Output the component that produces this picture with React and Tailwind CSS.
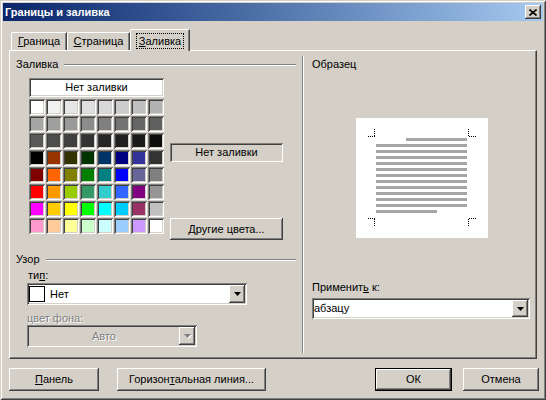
import React from "react";

// Win2000-style bevels, kept as plain strings so Tailwind picks them up
const RAISED =
  "shadow-[inset_-1px_-1px_0_#404040,inset_1px_1px_0_#ffffff,inset_-2px_-2px_0_#808080,inset_2px_2px_0_#d4d0c8]";
const SUNKEN =
  "shadow-[inset_1px_1px_0_#808080,inset_-1px_-1px_0_#ffffff,inset_2px_2px_0_#404040,inset_-2px_-2px_0_#d4d0c8]";
const ETCH = "h-[2px] border-t border-t-[#808080] border-b border-b-white";
const DISABLED_TEXT = "text-[#808080] [text-shadow:1px_1px_0_#ffffff]";

const PALETTE = [
  ["#ffffff", "#f2f2f2", "#e6e6e6", "#dfdfdf", "#d9d9d9", "#cccccc", "#bfbfbf", "#b3b3b3"],
  ["#a6a6a6", "#9f9f9f", "#999999", "#8c8c8c", "#808080", "#737373", "#666666", "#606060"],
  ["#595959", "#4d4d4d", "#404040", "#333333", "#262626", "#202020", "#1a1a1a", "#0d0d0d"],
  ["#000000", "#993300", "#333300", "#003300", "#003366", "#000080", "#333399", "#333333"],
  ["#800000", "#ff6600", "#808000", "#008000", "#008080", "#0000ff", "#666699", "#808080"],
  ["#ff0000", "#ff9900", "#99cc00", "#339966", "#33cccc", "#3366ff", "#800080", "#969696"],
  ["#ff00ff", "#ffcc00", "#ffff00", "#00ff00", "#00ffff", "#00ccff", "#993366", "#c0c0c0"],
  ["#ff99cc", "#ffcc99", "#ffff99", "#ccffcc", "#ccffff", "#99ccff", "#cc99ff", "#ffffff"],
];

function DropButton({ disabled }) {
  return (
    <div className={`w-[16px] h-full bg-[#d4d0c8] flex items-center justify-center ${RAISED}`}>
      <svg width="7" height="4" viewBox="0 0 7 4" className={disabled ? "[filter:drop-shadow(1px_1px_0_#fff)]" : ""}>
        <path d="M0 0h7L3.5 4z" fill={disabled ? "#808080" : "#000"} />
      </svg>
    </div>
  );
}

function Combo({ className, disabled, children }) {
  return (
    <div className={`${className} ${SUNKEN} p-[2px] flex ${disabled ? "bg-[#d4d0c8]" : "bg-white"}`}>
      <div className="flex-1 flex items-center min-w-0">{children}</div>
      <DropButton disabled={disabled} />
    </div>
  );
}

function GroupHeader({ title }) {
  return (
    <div className="flex items-center h-[13px]">
      <span>{title}</span>
      <div className={`flex-1 ml-[6px] ${ETCH}`} />
    </div>
  );
}

function Button({ className, children }) {
  return (
    <div className={`${className} h-full bg-[#d4d0c8] flex items-center justify-center ${RAISED}`}>
      {children}
    </div>
  );
}

function Dotted({ x1, y1, x2, y2 }) {
  return (
    <line
      x1={x1 + 0.5}
      y1={y1 + 0.5}
      x2={x2 + 0.5}
      y2={y2 + 0.5}
      stroke="#000"
      strokeWidth="1"
      strokeDasharray="1 1"
      shapeRendering="crispEdges"
    />
  );
}

function Preview() {
  const rows = Array.from({ length: 11 }, (_, i) => 26 + i * 6);
  return (
    <svg width="132" height="120" viewBox="0 0 132 120" className="block">
      <rect width="132" height="120" fill="#fff" />
      <Dotted x1={11} y1={18} x2={18} y2={18} />
      <Dotted x1={18} y1={10} x2={18} y2={18} />
      <Dotted x1={112} y1={10} x2={112} y2={18} />
      <Dotted x1={112} y1={18} x2={120} y2={18} />
      <Dotted x1={11} y1={100} x2={18} y2={100} />
      <Dotted x1={18} y1={100} x2={18} y2={108} />
      <Dotted x1={112} y1={100} x2={112} y2={108} />
      <Dotted x1={112} y1={100} x2={120} y2={100} />
      <rect x="50" y="20" width="61" height="3" fill="#a6a6a6" />
      {rows.map((y) => (
        <rect key={y} x="20" y={y} width="91" height="3" fill="#a6a6a6" />
      ))}
      <rect x="20" y="92" width="61" height="3" fill="#a6a6a6" />
    </svg>
  );
}

function FillSection() {
  return (
    <div className="flex mt-[7px] ml-[13px]">
      <div className="w-[135px] flex flex-col">
        <div className={`h-[19px] bg-white flex items-center justify-center ${SUNKEN}`}>Нет заливки</div>
        <div className="mt-[2px] grid grid-cols-[repeat(8,16px)] auto-rows-[16px] gap-[1px]">
          {PALETTE.flat().map((c, i) => (
            <div key={i} className={`w-[16px] h-[16px] ${SUNKEN}`} style={{ backgroundColor: c }} />
          ))}
        </div>
      </div>
      <div className="ml-[6px] w-[113px] flex flex-col">
        <div className={`mt-[65px] h-[19px] flex items-center justify-center ${SUNKEN}`}>Нет заливки</div>
        <div className="mt-[56px] h-[22px]">
          <Button className="w-full">
            <span>
              <u>Д</u>ругие цвета...
            </span>
          </Button>
        </div>
      </div>
    </div>
  );
}

function TabsRow() {
  const tab =
    "h-[18px] border-t border-l border-white rounded-tl-[2px] border-r border-r-[#404040] shadow-[inset_-1px_0_0_#808080] flex items-center justify-center";
  return (
    <div className="relative z-10 flex items-end h-[21px] pl-[2px]">
      <div className={`w-[56px] ${tab}`}>
        <span>
          <u>Г</u>раница
        </span>
      </div>
      <div className={`w-[63px] ${tab}`}>
        <span>
          <u>С</u>траница
        </span>
      </div>
      <div className="w-[60px] h-[22px] -mb-px bg-[#d4d0c8] border-t border-l border-white rounded-tl-[2px] border-r border-r-[#404040] shadow-[inset_-1px_0_0_#808080] flex justify-center pt-[3px]">
        <span className="h-[16px] px-[2px] border border-dotted border-black flex items-center">
          <span>
            <u>З</u>аливка
          </span>
        </span>
      </div>
    </div>
  );
}

export default function App() {
  return (
    <div className="w-[546px] h-[400px] bg-[#d4d0c8] font-['Liberation_Sans',Arial,sans-serif] text-[11px] leading-[13px] text-black p-[3px] flex flex-col shadow-[inset_1px_1px_0_#d4d0c8,inset_-1px_-1px_0_#404040,inset_2px_2px_0_#ffffff,inset_-2px_-2px_0_#808080]">
      <div className="h-[18px] flex items-center justify-between pl-[2px] pr-[2px] bg-linear-to-r from-[#0a246a] to-[#a6caf0]">
        <span className="font-bold text-white">Границы и заливка</span>
        <div className={`w-[16px] h-[14px] bg-[#d4d0c8] flex items-center justify-center ${RAISED}`}>
          <svg width="8" height="7" viewBox="0 0 8 7">
            <path d="M0.5 0.5L7.5 6.5M7.5 0.5L0.5 6.5" stroke="#000" strokeWidth="1.6" />
          </svg>
        </div>
      </div>

      <div className="flex-1 flex flex-col px-[6px] pt-[8px]">
        <TabsRow />

        <div className="h-[309px] flex border-t border-l border-white border-r border-b border-r-[#404040] border-b-[#404040] shadow-[inset_-1px_-1px_0_#808080]">
          <div className="w-[292px] flex flex-col pl-[6px] pr-[6px] pt-[7px]">
            <GroupHeader title="Заливка" />
            <FillSection />

            <div className="mt-[13px]">
              <GroupHeader title="Узор" />
            </div>
            <div className="mt-[3px] ml-[12px] h-[13px]">
              ти<u>п</u>:
            </div>
            <Combo className="mt-[1px] ml-[11px] w-[220px] h-[22px]">
              <div className="w-[16px] h-[16px] border border-black bg-white" />
              <span className="ml-[5px]">Нет</span>
            </Combo>
            <div className={`mt-[7px] ml-[11px] h-[13px] ${DISABLED_TEXT}`}>цвет фона:</div>
            <Combo className="ml-[11px] w-[170px] h-[22px]" disabled>
              <span className={`w-full text-center ${DISABLED_TEXT}`}>Авто</span>
            </Combo>
          </div>

          <div className="w-[2px] my-[5px] border-l border-l-[#808080] border-r border-r-white" />

          <div className="flex-1 flex flex-col pl-[8px] pt-[7px]">
            <div className="h-[13px]">Образец</div>
            <div className="mt-[47px] ml-[44px]">
              <Preview />
            </div>
            <div className="mt-[43px] h-[13px]">
              Применит<u>ь</u> к:
            </div>
            <Combo className="mt-[4px] w-[218px] h-[21px]">
              <span>абзацу</span>
            </Combo>
          </div>
        </div>

        <div className="mt-[9px] h-[23px] flex">
          <Button className="w-[90px]">
            <span>
              <u>П</u>анель
            </span>
          </Button>
          <Button className="ml-[18px] w-[149px]">
            <span>
              Горизон<u>т</u>альная линия...
            </span>
          </Button>
          <div className="ml-auto w-[77px] h-full border border-black">
            <Button className="w-full">ОК</Button>
          </div>
          <Button className="ml-[11px] mr-[-2px] w-[76px]">Отмена</Button>
        </div>
      </div>
    </div>
  );
}
